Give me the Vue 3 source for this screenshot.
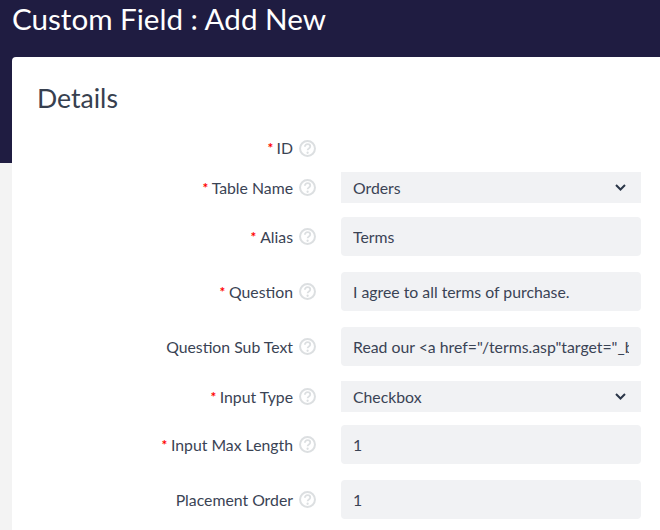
<script setup>
const fields = [
  { label: 'Table Name', required: true, type: 'select', value: 'Orders' },
  { label: 'Alias', required: true, type: 'text', value: 'Terms' },
  { label: 'Question', required: true, type: 'text', value: 'I agree to all terms of purchase.' },
  { label: 'Question Sub Text', required: false, type: 'text', value: 'Read our <a href="/terms.asp"target="_blank">terms of purchase</a>' },
  { label: 'Input Type', required: true, type: 'select', value: 'Checkbox', tight: true },
  { label: 'Input Max Length', required: true, type: 'text', value: '1' },
  { label: 'Placement Order', required: false, type: 'text', value: '1' }
]
</script>

<template>
  <div class="page">
    <header class="page-header">
      <h1>Custom Field : Add New</h1>
    </header>
    <section class="card">
      <h2>Details</h2>
      <div class="form-row id-row">
        <label class="field-label">
          <span class="req">*</span>ID
        </label>
        <svg class="help" viewBox="0 0 18 18" width="17" height="17">
          <circle cx="9" cy="9" r="7.9" fill="none" stroke="#dcdfe1" stroke-width="2.1" />
          <path d="M6.2 7.2c0-1.7 1.3-2.8 2.9-2.8s2.8 1.1 2.8 2.5c0 2.1-2.8 2-2.8 4" fill="none" stroke="#dcdfe1" stroke-width="1.9" />
          <circle cx="9.1" cy="13.5" r="1.2" fill="#dcdfe1" />
        </svg>
      </div>
      <div v-for="f in fields" :key="f.label" class="form-row" :class="[f.type, { tight: f.tight }]">
        <label class="field-label">
          <span v-if="f.required" class="req">*</span>{{ f.label }}
        </label>
        <svg class="help" viewBox="0 0 18 18" width="17" height="17">
          <circle cx="9" cy="9" r="7.9" fill="none" stroke="#dcdfe1" stroke-width="2.1" />
          <path d="M6.2 7.2c0-1.7 1.3-2.8 2.9-2.8s2.8 1.1 2.8 2.5c0 2.1-2.8 2-2.8 4" fill="none" stroke="#dcdfe1" stroke-width="1.9" />
          <circle cx="9.1" cy="13.5" r="1.2" fill="#dcdfe1" />
        </svg>
        <div v-if="f.type === 'select'" class="select-box">
          <span>{{ f.value }}</span>
          <svg viewBox="0 0 11 7" width="11" height="7">
            <path d="M1 1 5.5 5.5 10 1" fill="none" stroke="#2b3648" stroke-width="2" />
          </svg>
        </div>
        <input v-else class="text-input" type="text" :value="f.value" readonly />
      </div>
    </section>
  </div>
</template>

<style scoped>
.page {
  position: relative;
  height: 530px;
  overflow: hidden;
  background: #f3f3f3;
  font-family: Lato, "Liberation Sans", sans-serif;
  color: #3a4354;
}

.page-header {
  height: 163px;
  box-sizing: border-box;
  padding-left: 12px;
  background: #1f1c41;
}

.page-header h1 {
  margin: 0;
  font-size: 29.6px;
  font-weight: 400;
  line-height: 38px;
  color: #fff;
}

.card {
  position: absolute;
  top: 57px;
  left: 12px;
  right: -20px;
  height: 500px;
  box-sizing: border-box;
  padding: 24px 0 0 25px;
  background: #fff;
  border-radius: 4px;
}

.card h2 {
  margin: 0 0 22px;
  font-size: 26.6px;
  font-weight: 400;
  line-height: 34px;
  color: #37404f;
}

.form-row {
  display: flex;
  align-items: center;
  margin-bottom: 16px;
}

.id-row {
  height: 22px;
  margin-bottom: 14px;
}

.form-row.select {
  margin-top: -1px;
  margin-bottom: 14px;
}

.form-row.tight {
  margin-bottom: 13px;
}

.field-label {
  width: 256px;
  text-align: right;
  font-size: 15.8px;
  line-height: 20px;
  white-space: nowrap;
}

.req {
  display: inline-block;
  margin-right: 3px;
  color: #f00;
  font-size: 16px;
  font-weight: 700;
  transform: scale(0.85);
}

.help {
  flex: none;
  margin-left: 6px;
  margin-right: 25px;
}

.select-box {
  display: flex;
  align-items: center;
  justify-content: space-between;
  width: 300px;
  height: 31px;
  box-sizing: border-box;
  padding: 0 15px 0 12px;
  background: #f1f2f4;
  font-size: 15.8px;
}

.text-input {
  display: block;
  width: 300px;
  height: 39px;
  box-sizing: border-box;
  padding: 0 12px;
  border: none;
  border-radius: 4px;
  outline: none;
  background: #f1f2f4;
  font: inherit;
  font-size: 15.8px;
  color: #3a4354;
}
</style>

<style>
html,
body {
  margin: 0;
}
</style>
